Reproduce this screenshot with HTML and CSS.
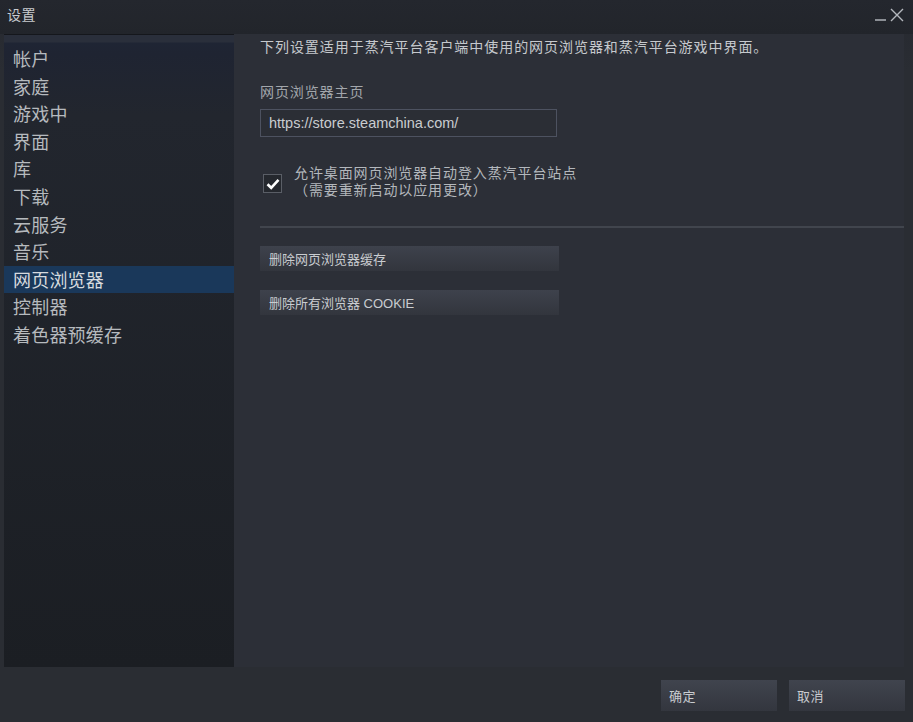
FILE: index.html
```html
<!DOCTYPE html>
<html lang="zh-CN">

<head>
    <meta charset="UTF-8">
    <meta name="viewport" content="width=device-width, initial-scale=1.0">
    <title>设置</title>
    <link rel="stylesheet" href="styles.css">
</head>

<body>
    <div class="window">
        <header class="titlebar">
            <span class="title">设置</span>
            <div class="controls">
                <span class="minimize"></span>
                <svg class="close" width="14" height="14" viewBox="0 0 14 14">
                    <path d="M1 1 L13 13 M13 1 L1 13" stroke="#b4b8be" stroke-width="1.4" fill="none" />
                </svg>
            </div>
        </header>

        <div class="main">
            <!-- Settings categories -->
            <ul class="sidebar">
                <li>帐户</li>
                <li>家庭</li>
                <li>游戏中</li>
                <li>界面</li>
                <li>库</li>
                <li>下载</li>
                <li>云服务</li>
                <li>音乐</li>
                <li class="active">网页浏览器</li>
                <li>控制器</li>
                <li>着色器预缓存</li>
            </ul>

            <section class="content">
                <p class="intro">下列设置适用于蒸汽平台客户端中使用的网页浏览器和蒸汽平台游戏中界面。</p>

                <label class="field-label" for="homepage">网页浏览器主页</label>
                <input class="url" type="text" id="homepage" value="https://store.steamchina.com/">

                <div class="check-row">
                    <span class="checkbox">
                        <svg width="14" height="12" viewBox="0 0 14 12">
                            <path d="M1.5 6.2 L5.2 9.8 L12.5 1.8" stroke="#fff" stroke-width="2.6" fill="none" />
                        </svg>
                    </span>
                    <div class="check-text">
                        <div class="line">允许桌面网页浏览器自动登入蒸汽平台站点</div>
                        <div class="line">（需要重新启动以应用更改）</div>
                    </div>
                </div>

                <hr class="divider">

                <button class="action" type="button">删除网页浏览器缓存</button>
                <button class="action" type="button">删除所有浏览器 COOKIE</button>
            </section>
        </div>

        <footer class="footer">
            <button class="dialog-btn" type="button">确定</button>
            <button class="dialog-btn" type="button">取消</button>
        </footer>
    </div>
</body>

</html>
```

FILE: styles.css
```css
body {
    margin: 0;
    padding: 0;
    background-color: #2a2d33;
    font-family: "Liberation Sans", "Noto Sans CJK SC", sans-serif;
    color: #c3c6ca;
}

* {
    box-sizing: border-box;
}

.window {
    width: 913px;
    height: 722px;
    display: flex;
    flex-direction: column;
    background: linear-gradient(to bottom, #262930, #2a2d33 10%, #2a2d33);
}

/* Title bar */
.titlebar {
    height: 34px;
    display: flex;
    justify-content: space-between;
    align-items: center;
    padding: 0 9px 6px 7px;
    background: linear-gradient(to bottom, #24272e, #22252b);
}

.title {
    font-size: 14px;
    color: #c8cbcf;
    letter-spacing: 0.5px;
}

.controls {
    display: flex;
    align-items: flex-end;
    gap: 4px;
    margin-top: 2px;
}

.minimize {
    width: 11px;
    height: 2px;
    background-color: #8a8e94;
    margin-bottom: 1px;
}

/* Main area */
.main {
    height: 633px;
    display: flex;
    padding: 0 9px 0 4px;
}

.sidebar {
    width: 230px;
    margin: 0;
    padding: 10px 0 0;
    list-style: none;
    border-top: 1px solid #15171c;
    background: linear-gradient(to bottom, #2a2f3b 0, #2a2f3b 7px, #1f2534 8px, #1f2432 18px, #22262e 80px, #1b1e23 100%);
}

.sidebar li {
    height: 27.6px;
    line-height: 27.6px;
    padding-left: 9px;
    font-family: "Noto Sans CJK SC", sans-serif;
    font-size: 18px;
    color: #b6babe;
    letter-spacing: 0.2px;
}

.sidebar li.active {
    background-color: #1a385a;
    color: #d6dade;
}

.content {
    flex: 1;
    padding: 2px 0 0 26px;
    background-color: #2c2f37;
}

.intro {
    margin: 0;
    font-family: "Noto Sans CJK SC", sans-serif;
    font-size: 14px;
    letter-spacing: 0.95px;
    line-height: 20px;
    color: #c6c9cd;
}

.field-label {
    display: block;
    margin-top: 25px;
    font-family: "Noto Sans CJK SC", sans-serif;
    font-size: 14px;
    letter-spacing: 0.9px;
    line-height: 20px;
    color: #a2a6ab;
}

.url {
    display: block;
    width: 297px;
    height: 28px;
    margin-top: 8px;
    padding: 0 8px;
    background-color: #2b2e35;
    border: 1px solid #4d5260;
    color: #c9ccd0;
    font-family: "Liberation Sans", sans-serif;
    font-size: 14.5px;
}

/* Checkbox */
.check-row {
    display: flex;
    align-items: flex-start;
    margin-top: 27px;
    padding-left: 3px;
}

.checkbox {
    width: 19px;
    height: 19px;
    margin-top: 10px;
    display: flex;
    align-items: center;
    justify-content: center;
    border: 1px solid #5a5e66;
    background-color: #25282e;
}

.check-text {
    margin-left: 12px;
    font-family: "Noto Sans CJK SC", sans-serif;
    font-size: 14px;
    letter-spacing: 0.9px;
    color: #b3b7bc;
}

.check-text .line {
    height: 17px;
    line-height: 17px;
}

.divider {
    margin: 28px 0 0;
    border: none;
    height: 2px;
    background-color: #41454d;
}

/* Buttons */
.action {
    display: block;
    width: 299px;
    height: 25px;
    margin-top: 18px;
    padding: 0 0 0 9px;
    text-align: left;
    border: none;
    background: linear-gradient(to bottom, #3e424c, #32353d);
    color: #c9ccd0;
    font-family: "Liberation Sans", "Noto Sans CJK SC", sans-serif;
    font-size: 13px;
    cursor: pointer;
}

.action + .action {
    margin-top: 19px;
}

.footer {
    flex: 1;
    display: flex;
    justify-content: flex-end;
    align-items: flex-start;
    gap: 12px;
    padding: 13px 8px 0 0;
}

.dialog-btn {
    width: 116px;
    height: 31px;
    padding: 0 0 0 8px;
    text-align: left;
    border: none;
    background: linear-gradient(to bottom, #40444e, #33363e);
    color: #c9ccd0;
    font-family: "Noto Sans CJK SC", sans-serif;
    font-size: 13px;
    letter-spacing: 0.5px;
    cursor: pointer;
}
```
